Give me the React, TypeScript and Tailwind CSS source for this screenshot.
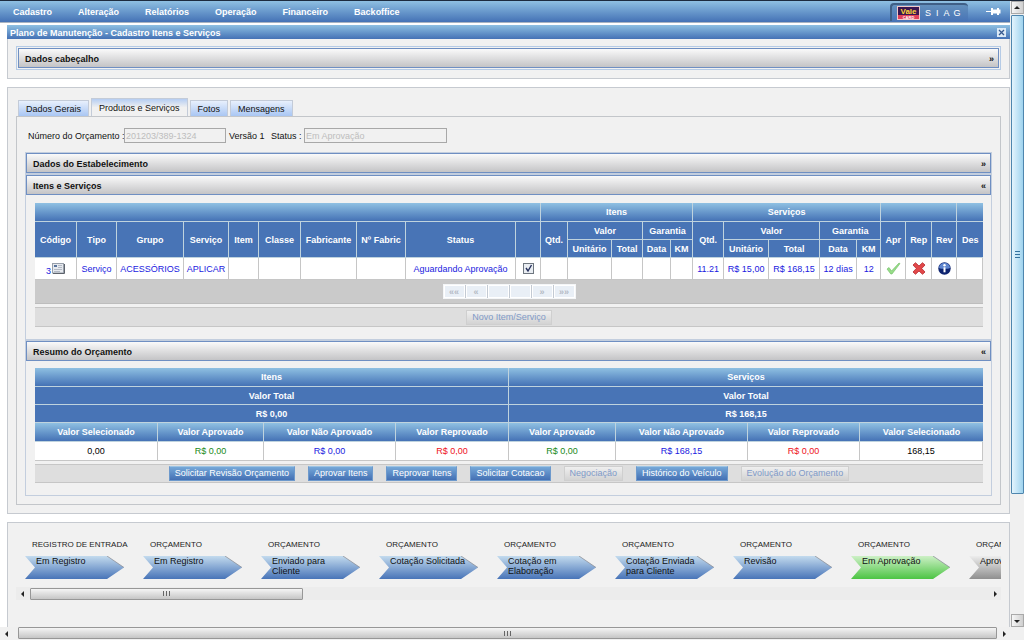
import { useState, type ReactNode } from 'react'
import clsx from 'clsx'

const BLUE_BAR = 'bg-gradient-to-b from-[#8fc0e2] to-[#4572b5]'

const menu = ['Cadastro', 'Alteração', 'Relatórios', 'Operação', 'Financeiro', 'Backoffice']
const tabs = ['Dados Gerais', 'Produtos e Serviços', 'Fotos', 'Mensagens']

const itemCols = [42, 40, 67, 45, 30, 42, 56, 49, 110, 25, 27, 44, 31, 28, 22, 31, 45, 51, 37, 24, 25, 26, 25, 26]
const summaryCols = [123, 106, 132, 113, 107, 132, 112, 123]

const summary = [
  { label: 'Valor Selecionado', value: '0,00', color: 'text-black' },
  { label: 'Valor Aprovado', value: 'R$ 0,00', color: 'text-[#1a8a1a]' },
  { label: 'Valor Não Aprovado', value: 'R$ 0,00', color: 'text-[#1a1ae0]' },
  { label: 'Valor Reprovado', value: 'R$ 0,00', color: 'text-[#ee1122]' },
  { label: 'Valor Aprovado', value: 'R$ 0,00', color: 'text-[#1a8a1a]' },
  { label: 'Valor Não Aprovado', value: 'R$ 168,15', color: 'text-[#1a1ae0]' },
  { label: 'Valor Reprovado', value: 'R$ 0,00', color: 'text-[#ee1122]' },
  { label: 'Valor Selecionado', value: '168,15', color: 'text-black' },
]

const actions = [
  { label: 'Solicitar Revisão Orçamento' },
  { label: 'Aprovar Itens' },
  { label: 'Reprovar Itens' },
  { label: 'Solicitar Cotacao' },
  { label: 'Negociação', disabled: true },
  { label: 'Histórico do Veículo' },
  { label: 'Evolução do Orçamento', disabled: true },
]

const steps = [
  { group: 'REGISTRO DE ENTRADA', label: 'Em Registro', fill: 'blue' },
  { group: 'ORÇAMENTO', label: 'Em Registro', fill: 'blue' },
  { group: 'ORÇAMENTO', label: 'Enviado para Cliente', fill: 'blue' },
  { group: 'ORÇAMENTO', label: 'Cotação Solicitada', fill: 'blue' },
  { group: 'ORÇAMENTO', label: 'Cotação em Elaboração', fill: 'blue' },
  { group: 'ORÇAMENTO', label: 'Cotação Enviada para Cliente', fill: 'blue' },
  { group: 'ORÇAMENTO', label: 'Revisão', fill: 'blue' },
  { group: 'ORÇAMENTO', label: 'Em Aprovação', fill: 'green' },
  { group: 'ORÇAMENTO', label: 'Aprovado', fill: 'gray' },
]

function Logo() {
  return (
    <div className="flex h-[18px] w-[78px] items-center gap-[5px] rounded-t-[4px] border-l-2 border-t-2 border-[#3f5f86] bg-gradient-to-b from-[#6390bd] to-[#4874b6] pl-[5px]">
      <svg width="23" height="14" viewBox="0 0 23 14" role="img" aria-label="Vale Card">
        <rect width="23" height="14" fill="#f0c8c8" />
        <rect x="1" y="1" width="21" height="8" fill="#3a1650" />
        <rect x="1" y="9" width="21" height="4" fill="#e0405a" />
        <text x="11.5" y="8" textAnchor="middle" fontSize="8" fontWeight="700" fill="#ffd23a">Vale</text>
        <text x="11.5" y="13" textAnchor="middle" fontSize="4" fontWeight="700" fill="#fff">CARD</text>
      </svg>
      <span className="flex gap-1 text-[9px] text-white">
        <span>S</span><span className="px-px">I</span><span>A</span><span>G</span>
      </span>
    </div>
  )
}

function PinIcon() {
  return (
    <svg width="15" height="9" viewBox="0 0 15 9" fill="#fff">
      <path d="M0 4h5v1H0zM5 1h2v1.500h4V1h2v7h-2V6.500H7V8H5z" />
      <path d="M13 2.500h1.500v4H13z" />
    </svg>
  )
}

function NoteIcon() {
  return (
    <svg width="13" height="12" viewBox="0 0 13 12">
      <rect x="0.500" y="0.500" width="11" height="9.500" fill="#e6e9ee" stroke="#98a0ab" />
      <path d="M1 10.500h11.500V1" fill="none" stroke="#5d636c" />
      <rect x="2" y="2" width="3" height="2" fill="#58749c" />
      <path d="M6 2.500h4M6 4.500h4M2 6.500h8M2 8.500h6" stroke="#b3bac5" />
    </svg>
  )
}

function CheckIcon() {
  return (
    <svg width="15" height="13" viewBox="0 0 15 13">
      <path d="M1 7l2-1.500 2.500 3.500L13 1l1 .600L6 12H4.800z" fill="#97dd88" stroke="#6dbb62" strokeWidth=".6" />
    </svg>
  )
}

function CrossIcon() {
  return (
    <svg width="14" height="13" viewBox="0 0 14 13">
      <path d="M1 3l2.500-2.300L7 4l3.500-3.300L13 3 9.700 6.500 13 10l-2.500 2.300L7 9l-3.500 3.300L1 10l3.300-3.500z" fill="#e2484a" stroke="#b62a2e" strokeWidth=".8" />
    </svg>
  )
}

function InfoIcon() {
  return (
    <svg width="13" height="13" viewBox="0 0 13 13">
      <circle cx="6.500" cy="6.500" r="6.200" fill="#0e2470" />
      <path d="M1 6a5.500 5.300 0 0 1 11 0c-3 1.200-8 1.200-11 0z" fill="#5f86cf" />
      <circle cx="6.500" cy="3.300" r="1.200" fill="#fff" />
      <path d="M5.500 5.300h2v5h-2z" fill="#fff" />
    </svg>
  )
}

function SectionHeader({ title, open }: { title: string; open?: boolean }) {
  return (
    <button
      type="button"
      className="flex h-5 w-full items-center justify-between border border-[#6f8fc2] bg-gradient-to-b from-[#fafafa] to-[#c4c4c6] px-[6px] pt-[2px] font-bold text-[#111]"
    >
      <span>{title}</span>
      <span className="-mr-[2px]">{open ? '«' : '»'}</span>
    </button>
  )
}

function Section({ title, open, children }: { title: string; open?: boolean; children?: ReactNode }) {
  return (
    <section className="border border-[#c3cede]">
      <SectionHeader title={title} open={open} />
      {children}
    </section>
  )
}

function Btn({ label, disabled }: { label: string; disabled?: boolean }) {
  return (
    <button
      type="button"
      disabled={disabled}
      className={clsx(
        'h-[15px] border px-[5px] leading-[13px]',
        disabled
          ? 'border-[#cfcfcf] bg-gradient-to-b from-[#efefef] to-[#d3d3d3] text-[#7f9ac8]'
          : 'border-[#6d99cc] border-t-[#9cc4e4] bg-gradient-to-b from-[#76a8d8] to-[#4470b4] text-white'
      )}
    >
      {label}
    </button>
  )
}

function Th({ children, bar, ...rest }: { children?: ReactNode; bar?: boolean; colSpan?: number; rowSpan?: number }) {
  return (
    <th
      {...rest}
      className={clsx(
        'border-b border-r border-[#bfd3de] p-0 text-center font-bold text-white last:border-r-0',
        bar ? BLUE_BAR : 'bg-[#4874b6]'
      )}
    >
      {children}
    </th>
  )
}

function Td({ children, className = 'text-[#1a1ae0]' }: { children?: ReactNode; className?: string }) {
  return <td className={clsx('border-b border-r border-[#c6c6c6] bg-white p-0 text-center', className)}>{children}</td>
}

function Cols({ widths }: { widths: number[] }) {
  return (
    <colgroup>
      {widths.map((w, i) => <col key={i} style={{ width: w }} />)}
    </colgroup>
  )
}

function ItemsTable() {
  const [checked, setChecked] = useState(true)
  return (
    <table className="w-full table-fixed border-separate border-spacing-0 whitespace-nowrap">
      <Cols widths={itemCols} />
      <thead>
        <tr className="h-[19px]">
          <Th bar colSpan={10} />
          <Th bar colSpan={5}>Itens</Th>
          <Th bar colSpan={5}>Serviços</Th>
          <Th bar colSpan={3} />
          <Th bar />
        </tr>
        <tr className="h-[18px]">
          {['Código', 'Tipo', 'Grupo', 'Serviço', 'Item', 'Classe', 'Fabricante', 'Nº Fabric', 'Status', '', 'Qtd.'].map(h => (
            <Th key={h} rowSpan={2}>{h}</Th>
          ))}
          <Th colSpan={2}>Valor</Th>
          <Th colSpan={2}>Garantia</Th>
          <Th rowSpan={2}>Qtd.</Th>
          <Th colSpan={2}>Valor</Th>
          <Th colSpan={2}>Garantia</Th>
          <Th rowSpan={2}>Apr</Th>
          <Th rowSpan={2}>Rep</Th>
          <Th rowSpan={2}>Rev</Th>
          <Th rowSpan={2}>Des</Th>
        </tr>
        <tr className="h-[18px]">
          <Th>Unitário</Th>
          <Th>Total</Th>
          <Th>Data</Th>
          <Th>KM</Th>
          <Th>Unitário</Th>
          <Th>Total</Th>
          <Th>Data</Th>
          <th className="border-b border-r border-[#bfd3de] bg-[#4874b6] p-0 font-bold text-white">KM</th>
        </tr>
      </thead>
      <tbody>
        <tr className="h-[22px]">
          <Td><a href="#item" className="flex items-center justify-center gap-px"><span className="pt-1">3</span><NoteIcon /></a></Td>
          <Td>Serviço</Td>
          <Td>ACESSÓRIOS</Td>
          <Td>APLICAR</Td>
          <Td /><Td /><Td /><Td />
          <Td>Aguardando Aprovação</Td>
          <Td>
            <label className="relative mx-auto block size-[11px]">
              <input
                type="checkbox"
                aria-label="Selecionar item"
                checked={checked}
                onChange={e => setChecked(e.target.checked)}
                className="block size-[11px] appearance-none border border-[#6f7780] bg-[#e9edf2]"
              />
              {checked && (
                <svg className="pointer-events-none absolute inset-0" width="11" height="11" viewBox="0 0 11 11">
                  <path d="M3 5l2 3 3.500-6" fill="none" stroke="#26305c" strokeWidth="1.400" />
                </svg>
              )}
            </label>
          </Td>
          <Td /><Td /><Td /><Td /><Td />
          <Td>11.21</Td>
          <Td>R$ 15,00</Td>
          <Td>R$ 168,15</Td>
          <Td>12 dias</Td>
          <Td>12</Td>
          <Td><button type="button" aria-label="Aprovar" className="block mx-auto"><CheckIcon /></button></Td>
          <Td><button type="button" aria-label="Reprovar" className="block mx-auto"><CrossIcon /></button></Td>
          <Td><button type="button" aria-label="Revisar" className="block mx-auto"><InfoIcon /></button></Td>
          <Td />
        </tr>
      </tbody>
    </table>
  )
}

function Pager() {
  return (
    <div className="flex h-6 items-center justify-center border-b border-[#bdbdbd] bg-[#cacaca]">
      <div className="flex h-[15px] gap-px border border-[#f4f6f8] bg-[#c3cad3]">
        {['««', '«', '', '', '»', '»»'].map((s, i) => (
          <button key={i} type="button" disabled aria-label={s || 'Página'} className="w-[21px] border border-white bg-[#e9eff6] font-bold leading-[10px] text-[#b4bac4]">{s}</button>
        ))}
      </div>
    </div>
  )
}

function SummaryTable() {
  return (
    <table className="w-full table-fixed border-separate border-spacing-0 whitespace-nowrap">
      <Cols widths={summaryCols} />
      <thead>
        <tr className="h-[19px]"><Th bar colSpan={4}>Itens</Th><Th bar colSpan={4}>Serviços</Th></tr>
        <tr className="h-[18px]"><Th colSpan={4}>Valor Total</Th><Th colSpan={4}>Valor Total</Th></tr>
        <tr className="h-[18px]"><Th colSpan={4}>R$ 0,00</Th><Th colSpan={4}>R$ 168,15</Th></tr>
        <tr className="h-[19px]">
          {summary.map((s, i) => <Th key={i} bar>{s.label}</Th>)}
        </tr>
      </thead>
      <tbody>
        <tr className="h-[19px]">
          {summary.map((s, i) => <Td key={i} className={s.color}>{s.value}</Td>)}
        </tr>
      </tbody>
    </table>
  )
}

function Step({ group, label, fill }: { group: string; label: string; fill: string }) {
  return (
    <li className="w-[118px] shrink-0">
      <div className="pl-[7px] text-[8px] leading-3 whitespace-nowrap text-[#222]">{group}</div>
      <div className="relative mt-[5px]">
        <svg className="block" width="100" height="23" viewBox="0 0 100 23">
          <path d="M0 0h82l17 11.500L82 23H0l10-11.500z" fill={`url(#${fill})`} />
          <path d="M82 0l17 11.500" stroke="#8d9199" strokeWidth=".8" />
        </svg>
        <span className="absolute left-[11px] top-0 w-[80px] text-[9px] leading-[10px] text-[#111]">{label}</span>
      </div>
    </li>
  )
}

function ArrowBtn({ dir, label }: { dir: 'left' | 'right' | 'up' | 'down'; label: string }) {
  const d = { left: 'M4 0v6L1 3z', right: 'M2 0v6l3-3z', up: 'M0 4h6L3 1z', down: 'M0 2h6L3 5z' }[dir]
  const boxed = dir === 'up' || dir === 'down'
  return (
    <button
      type="button"
      aria-label={label}
      className={clsx('flex size-[13px] shrink-0 items-center justify-center', boxed && 'border border-[#a9a9a9] bg-gradient-to-r from-[#f6f6f6] to-[#cfcfcf]')}
    >
      <svg width="6" height="6" viewBox="0 0 6 6"><path d={d} fill="#222" /></svg>
    </button>
  )
}

function Grip({ vertical }: { vertical?: boolean }) {
  return (
    <svg className={clsx(vertical && 'rotate-90')} width="7" height="5" viewBox="0 0 7 5">
      <path d="M.500 0v5M3.500 0v5M6.500 0v5" stroke={vertical ? '#34729f' : '#666'} />
    </svg>
  )
}

function HThumb({ className }: { className: string }) {
  return (
    <div className={clsx('flex items-center justify-center rounded-[1px] border border-[#979797] bg-gradient-to-b from-[#f5f5f5] to-[#c6c6c6]', className)}>
      <Grip />
    </div>
  )
}

export default function App() {
  const [tab, setTab] = useState(1)

  return (
    <div className="flex h-screen flex-col overflow-hidden bg-white font-['Liberation_Sans',Arial,sans-serif] text-[9px] leading-3 text-[#111]">
      <div className="flex min-h-0 flex-1 border-t border-[#1d2b3e]">
        <div className="flex min-w-0 flex-1 flex-col overflow-hidden">
          <header className={clsx('flex h-[22px] shrink-0 items-center justify-between border-b border-[#a9b4c2] pl-[13px] pr-[9px]', BLUE_BAR)}>
            <nav className="flex gap-[26px] font-bold text-white">
              {menu.map(m => <a key={m} href={`#${m}`}>{m}</a>)}
            </nav>
            <div className="flex items-center gap-[18px]">
              <Logo />
              <button type="button" aria-label="Fixar menu"><PinIcon /></button>
            </div>
          </header>

          <main className="flex flex-1 flex-col gap-2 pl-[7px] pt-[2px]">
            <section>
              <div className={clsx('flex h-[14px] items-center justify-between pl-[3px] pr-[4px] pt-px', BLUE_BAR)}>
                <h1 className="font-bold text-white">Plano de Manutenção - Cadastro Itens e Serviços</h1>
                <button type="button" aria-label="Fechar" className="flex size-[9px] items-center justify-center bg-[#dbe9f6]">
                  <svg width="7" height="7" viewBox="0 0 7 7"><path d="M1 1l5 5M6 1L1 6" stroke="#36598f" strokeWidth="1.300" /></svg>
                </button>
              </div>
              <div className="border-x border-b border-[#c6cad0] bg-[#f1f1f1] px-[8px] pb-2 pt-[7px]">
                <div className="border border-[#b5cbe6] p-px">
                  <SectionHeader title="Dados cabeçalho" />
                </div>
              </div>
            </section>

            <section className="border border-[#c6cad0] bg-[#f1f1f1] px-[8px] pb-[8px] pt-[10px]">
              <div role="tablist" className="flex items-end gap-[2px] pl-[2px]">
                {tabs.map((t, i) => (
                  <button
                    key={t}
                    type="button"
                    role="tab"
                    aria-selected={i === tab}
                    onClick={() => setTab(i)}
                    className={clsx(
                      'border-x border-t border-[#c3cbd8] px-[7px]',
                      i === tab
                        ? 'h-[18px] bg-gradient-to-b from-[#b5cdf2] to-[#f1f1f1] to-50%'
                        : 'h-[16px] bg-gradient-to-b from-[#e8f0fc] to-[#a9c6f3]'
                    )}
                  >
                    {t}
                  </button>
                ))}
              </div>
              <div className="border border-[#c3c6ca] px-2 pb-2 pt-[11px]">
                <div className="flex items-center pb-[9px] pl-[3px]">
                  <label htmlFor="numero" className="w-[96px] whitespace-nowrap">Número do Orçamento :</label>
                  <input id="numero" disabled defaultValue="201203/389-1324" className="h-[15px] w-[102px] border border-[#a8a8a8] bg-[#f1f1f1] px-px text-[#bdbdbd]" />
                  <span className="w-[42px] whitespace-nowrap pl-[3px]">Versão 1</span>
                  <label htmlFor="status" className="w-[36px] whitespace-nowrap pl-[3px]">Status :</label>
                  <input id="status" disabled defaultValue="Em Aprovação" className="h-[15px] w-[143px] border border-[#a8a8a8] bg-[#f1f1f1] px-px text-[#bdbdbd]" />
                </div>

                <Section title="Dados do Estabelecimento" />
                <Section title="Itens e Serviços" open>
                  <div className="pb-3 pl-[9px] pr-2 pt-2">
                    <ItemsTable />
                    <Pager />
                    <div className="mt-[3px] flex h-5 items-center justify-center border-y border-[#c6c6c6] bg-[#dedede]">
                      <Btn label="Novo Item/Serviço" disabled />
                    </div>
                  </div>
                </Section>
                <Section title="Resumo do Orçamento" open>
                  <div className="pb-3 pl-[9px] pr-2 pt-[7px]">
                    <SummaryTable />
                    <div className="mt-[3px] flex h-[19px] items-center justify-center gap-[13px] border-y border-[#c6c6c6] bg-[#dedede]">
                      {actions.map(a => <Btn key={a.label} {...a} />)}
                    </div>
                  </div>
                </Section>
              </div>
            </section>

            <section className="flex-1 border-x border-t border-[#c6cad0] bg-[#f1f1f1] px-[8px] pt-4">
              <svg width="0" height="0" className="absolute">
                <defs>
                  <linearGradient id="blue" x1="0" y1="0" x2="0" y2="1"><stop offset="0" stopColor="#c3dbee" /><stop offset="1" stopColor="#4874b8" /></linearGradient>
                  <linearGradient id="green" x1="0" y1="0" x2="0" y2="1"><stop offset="0" stopColor="#cdf0c6" /><stop offset="1" stopColor="#4cc443" /></linearGradient>
                  <linearGradient id="gray" x1="0" y1="0" x2="0" y2="1"><stop offset="0" stopColor="#ededed" /><stop offset="1" stopColor="#8f8f8f" /></linearGradient>
                </defs>
              </svg>
              <ol className="flex overflow-hidden pl-[9px]">
                {steps.map((s, i) => <Step key={i} {...s} />)}
              </ol>
              <div className="mt-2 flex h-[13px] items-center bg-[#ececec]">
                <ArrowBtn dir="left" label="Etapas anteriores" />
                <div className="flex h-full flex-1 items-center pl-px">
                  <HThumb className="h-3 w-[28.500%]" />
                </div>
                <ArrowBtn dir="right" label="Próximas etapas" />
              </div>
            </section>
          </main>
        </div>

        <div className="flex w-[14px] shrink-0 flex-col items-center bg-[#f0f0f0]">
          <ArrowBtn dir="up" label="Rolar para cima" />
          <div className="min-h-0 w-full flex-1 pl-px pt-px">
            <div className="flex h-[80%] w-full items-center justify-center rounded-[1px] border border-[#4f86ae] bg-gradient-to-r from-[#e3f4fd] to-[#9fd3ee]">
              <Grip vertical />
            </div>
          </div>
          <ArrowBtn dir="down" label="Rolar para baixo" />
        </div>
      </div>

      <div className="flex h-[13px] shrink-0 items-center bg-[#f0f0f0] pr-[14px]">
        <ArrowBtn dir="left" label="Rolar para a esquerda" />
        <div className="h-full flex-1 pl-[5px]">
          <HThumb className="h-3 w-full" />
        </div>
        <ArrowBtn dir="right" label="Rolar para a direita" />
      </div>
    </div>
  )
}
